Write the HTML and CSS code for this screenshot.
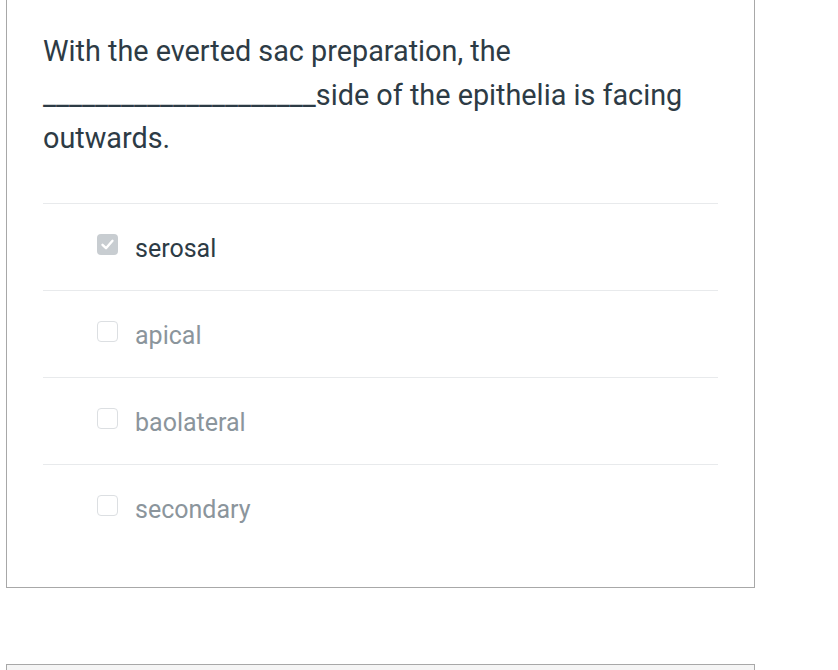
FILE: index.html
```html
<!DOCTYPE html>
<html>
<head>
<meta charset="utf-8">
<link rel="stylesheet" href="styles.css">
</head>
<body>
<div class="page">
  <div class="card">
    <div class="question">With the everted sac preparation, the _____________________side of the epithelia is facing outwards.</div>
    <div class="answers">
      <div class="answer selected">
        <span class="box checked"><svg viewBox="0 0 21 21" width="21" height="21"><path d="M5.5 10.8 L9 14.2 L15.5 6.8" fill="none" stroke="#fff" stroke-width="2.4" stroke-linecap="round" stroke-linejoin="round"/></svg></span>
        <span class="label">serosal</span>
      </div>
      <div class="answer">
        <span class="box"></span>
        <span class="label">apical</span>
      </div>
      <div class="answer">
        <span class="box"></span>
        <span class="label">baolateral</span>
      </div>
      <div class="answer">
        <span class="box"></span>
        <span class="label">secondary</span>
      </div>
    </div>
  </div>
  <div class="card next"></div>
</div>
</body>
</html>
```
FILE: styles.css
```css
html, body {
  margin: 0;
  padding: 0;
  background: #fff;
  height: 670px;
  overflow: hidden;
}
.page {
  padding-left: 6px;
  font-family: Roboto, "Liberation Sans", sans-serif;
}
.card {
  width: 747px;
  border: 1px solid #a8a8a8;
  background: #fff;
  box-sizing: content-box;
}
.card:first-child {
  margin-top: -7px;
  padding: 36px 36px 36px 36px;
  width: 675px;
}
.question {
  font-size: 28.8px;
  line-height: 43.5px;
  color: #2d3b45;
}
.answers {
  margin-top: 42px;
}
.answer {
  display: flex;
  align-items: center;
  height: 86px;
  border-top: 1px solid #e8eaec;
  padding-left: 54px;
  gap: 17px;
}
.box {
  width: 19px;
  height: 19px;
  border: 1px solid #dcdfe2;
  border-radius: 4px;
  display: flex;
  align-items: center;
  justify-content: center;
  margin-top: -5px;
}
.box.checked {
  width: 21px;
  height: 21px;
  border: none;
  background: #c8cdd1;
}
.label {
  font-size: 25px;
  color: #8b959c;
  margin-top: 3px;
}
.selected .label {
  color: #2d3b45;
}
.card.next {
  margin-top: 76px;
  height: 60px;
  background: #f5f5f5;
}
```
